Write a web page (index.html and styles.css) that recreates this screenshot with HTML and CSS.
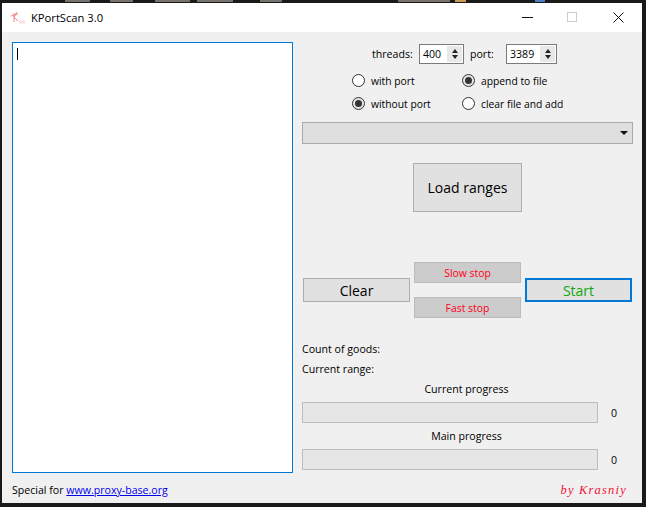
FILE: index.html
```html
<!DOCTYPE html>
<html lang="en">
<head>
<meta charset="utf-8">
<title>KPortScan 3.0</title>
<link rel="stylesheet" href="styles.css">
</head>
<body>
<div class="backdrop"><i class="bit b1"></i><i class="bit b2"></i><i class="bit b3"></i><i class="bit b4"></i><i class="bit b5"></i><i class="bit b6"></i><i class="bit b7"></i><i class="bit b8"></i></div>
<div class="window">
  <header class="titlebar">
    <svg class="app-icon" width="16" height="14" viewBox="0 0 16 14"><path d="M4 2V11M1 5L8 3M4 6L7 1M4 6L8 10" fill="none" stroke="#f0808e" stroke-width="1"/><path d="M10 9.500V12.500M12 9.500V12.500M14 9.500V12.500" fill="none" stroke="#f8bcc4" stroke-width="1"/></svg>
    <span class="title">KPortScan 3.0</span>
    <div class="controls">
      <svg class="ctl ctl-min" width="11" height="11" viewBox="0 0 11 11"><path d="M0 5.500H11" stroke="#111" stroke-width="1"/></svg>
      <svg class="ctl ctl-max" width="11" height="11" viewBox="0 0 11 11"><rect x="0.500" y="0.500" width="9" height="9" fill="none" stroke="#ccc"/></svg>
      <svg class="ctl ctl-close" width="11" height="11" viewBox="0 0 11 11"><path d="M0.500 0.500L10.500 10.500M10.500 0.500L0.500 10.500" stroke="#111" stroke-width="1"/></svg>
    </div>
  </header>
  <main class="content">
    <div class="left">
      <div class="editor"><span class="caret"></span></div>
      <p class="special">Special for <a href="#">www.proxy-base.org</a></p>
    </div>
    <div class="right">
      <div class="spin-row">
        <span class="thread-label">threads:</span>
        <div class="spin spin-threads"><span class="spin-val">400</span><span class="spin-btns"><i class="up"></i><i class="down"></i></span></div>
        <span class="port-label">port:</span>
        <div class="spin spin-port"><span class="spin-val">3389</span><span class="spin-btns"><i class="up"></i><i class="down"></i></span></div>
      </div>
      <div class="radio-grid">
        <label class="radio-item"><span class="radio"></span>with port</label>
        <label class="radio-item"><span class="radio on"></span>append to file</label>
        <label class="radio-item"><span class="radio on"></span>without port</label>
        <label class="radio-item"><span class="radio"></span>clear file and add</label>
      </div>
      <div class="combo"><i class="combo-arrow"></i></div>
      <div class="load-wrap"><button class="btn btn-load">Load ranges</button></div>
      <div class="actions">
        <button class="btn btn-main">Clear</button>
        <div class="stops">
          <button class="btn btn-stop">Slow stop</button>
          <button class="btn btn-stop">Fast stop</button>
        </div>
        <button class="btn btn-main btn-start">Start</button>
      </div>
      <p class="info info-goods">Count of goods:</p>
      <p class="info info-range">Current range:</p>
      <p class="progress-label first">Current progress</p>
      <div class="progress-row"><div class="bar"></div><span class="count">0</span></div>
      <p class="progress-label">Main progress</p>
      <div class="progress-row"><div class="bar"></div><span class="count">0</span></div>
      <p class="credit">by Krasniy</p>
    </div>
  </main>
</div>
</body>
</html>
```

FILE: styles.css
```css
* { box-sizing: border-box; }
html, body { margin: 0; height: 100%; }
body {
  background: #1a1a1a;
  font-family: "Open Sans", "Noto Sans", sans-serif;
  font-size: 10.600px;
  color: #000;
  overflow: hidden;
  width: 646px;
  height: 507px;
}
p { margin: 0; }
.backdrop {
  height: 3px;
  overflow: hidden;
  display: flex;
  align-items: flex-start;
}
.bit { display: block; height: 2px; background: #77736c; flex: none; }
.b1 { width: 25px; margin-left: 65px; }
.b2 { width: 23px; margin-left: 20px; }
.b3 { width: 35px; margin-left: 22px; }
.b4 { width: 36px; margin-left: 7px; }
.b5 { width: 22px; margin-left: 27px; }
.b6 { width: 52px; margin-left: 116px; }
.b7 { width: 11px; margin-left: 5px; background: #c89a50; }
.b8 { width: 10px; margin-left: 69px; background: #4a80c0; }
.window {
  margin-left: 2px;
  width: 640px;
  height: 500px;
  background: #f0f0f0;
  display: flex;
  flex-direction: column;
}
.titlebar {
  height: 29px;
  background: #fff;
  display: flex;
  align-items: center;
  padding-left: 8px;
  flex: none;
}
.app-icon { flex: none; margin-top: 1px; }
.title { margin-left: 5px; font-size: 11.200px; color: #000; }
.controls { margin-left: auto; display: flex; align-items: center; margin-right: 18px; }
.ctl { display: block; }
.ctl-max { margin-left: 34px; }
.ctl-close { margin-left: 35px; }
.content { display: flex; padding: 10px 9px 0 10px; flex: 1; }
.left { width: 281px; flex: none; }
.editor {
  height: 431px;
  background: #fff;
  border: 1px solid #0078d7;
  padding: 5px 0 0 4px;
}
.caret { display: block; width: 1px; height: 12px; background: #000; }
.special { margin-top: 9px; line-height: 16px; }
.special a { color: #0000ee; }
.right { width: 331px; margin-left: 9px; flex: none; }
.spin-row { display: flex; align-items: center; height: 20px; margin-top: 2px; padding-left: 70px; }
.thread-label { width: 47px; }
.spin {
  display: flex;
  height: 20px;
  border: 1px solid #7a7a7a;
  background: #fff;
  align-items: center;
  justify-content: space-between;
  padding: 0 1px 0 3px;
}
.spin-threads { width: 45px; }
.spin-port { width: 51px; }
.port-label { margin-left: 6px; width: 36px; }
.spin-btns { display: flex; flex-direction: column; width: 15px; height: 16px; background: #e8e8e8; align-items: center; justify-content: space-around; padding: 2px 0; }
.spin-btns i { display: block; width: 0; height: 0; border-left: 3.500px solid transparent; border-right: 3.500px solid transparent; }
.up { border-bottom: 4px solid #222; }
.down { border-top: 4px solid #222; }
.radio-grid {
  display: grid;
  grid-template-columns: 110px auto;
  grid-auto-rows: 23px;
  margin-top: 5px;
  padding-left: 50px;
  font-size: 10.300px;
}
.radio-item { display: flex; align-items: center; gap: 6px; }
.radio {
  width: 13px;
  height: 13px;
  border: 1px solid #333;
  border-radius: 50%;
  background: #fff;
  flex: none;
  display: flex;
  align-items: center;
  justify-content: center;
}
.radio.on { background: #e4e4e4; }
.radio.on::after { content: ""; width: 7px; height: 7px; border-radius: 50%; background: #333; }
.combo {
  height: 22px;
  margin-top: 7px;
  background: #dfdfdf;
  border: 1px solid #a9a9a9;
  display: flex;
  align-items: center;
  justify-content: flex-end;
  padding-right: 4px;
}
.combo-arrow { width: 0; height: 0; border-left: 4px solid transparent; border-right: 4px solid transparent; border-top: 4px solid #111; }
.load-wrap { display: flex; justify-content: center; margin-top: 19px; }
.btn {
  font-family: inherit;
  color: #000;
  padding: 0;
  background: #e1e1e1;
  border: 1px solid #adadad;
}
.btn-load { width: 109px; height: 49px; font-size: 14px; }
.actions { display: flex; align-items: center; margin-top: 50px; padding-left: 1px; }
.btn-main { width: 107px; height: 24px; font-size: 14px; flex: none; }
.btn-start { color: #10a810; border: 2px solid #0078d7; margin-left: 4px; }
.stops { display: flex; flex-direction: column; gap: 14px; margin-left: 4px; flex: none; }
.btn-stop { width: 107px; height: 21px; background: #ccc; border-color: #bbb; color: #ff0018; font-size: 10.400px; }
.info { line-height: 16px; }
.info-goods { margin-top: 23px; }
.info-range { margin-top: 4px; }
.progress-label { text-align: center; line-height: 16px; margin-top: 5px; width: 329px; }
.progress-label.first { margin-top: 4px; }
.progress-row { display: flex; align-items: center; margin-top: 5px; }
.bar { width: 296px; height: 21px; background: #e6e6e6; border: 1px solid #bcbcbc; }
.count { margin-left: 13px; }
.credit { margin-top: 12px; text-align: right; padding-right: 6px; line-height: 16px; color: #f01030; font-family: "Liberation Serif", serif; font-style: italic; font-size: 12.500px; letter-spacing: 1.200px; }
```
